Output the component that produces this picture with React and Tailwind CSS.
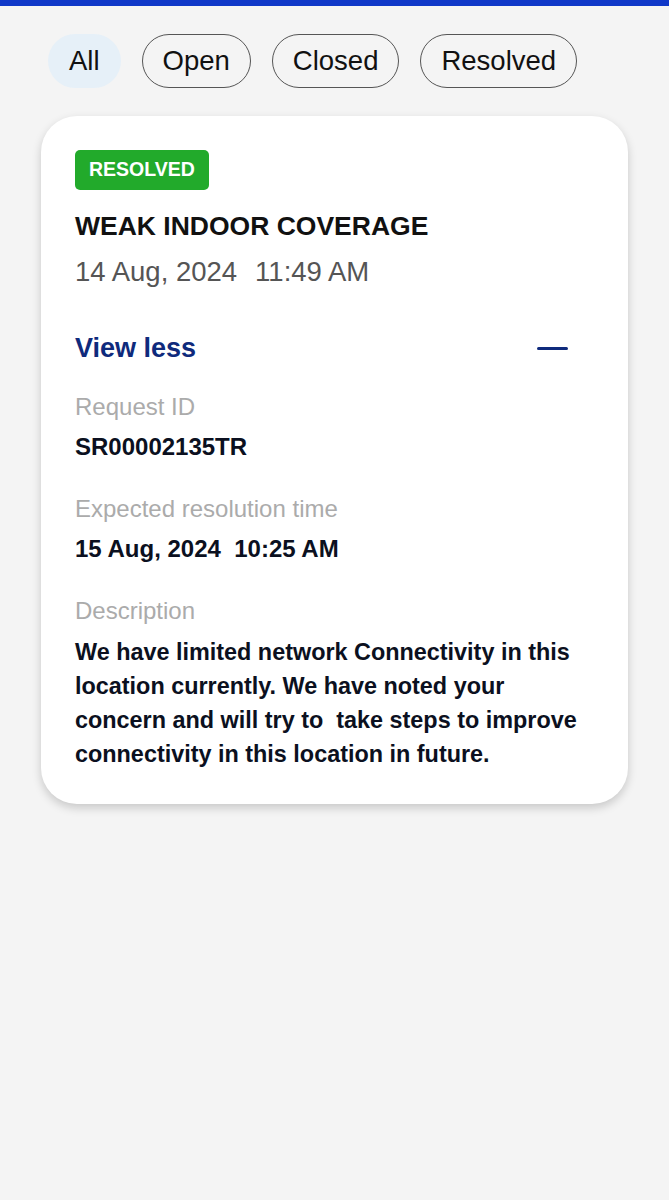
const filters = ['All', 'Open', 'Closed', 'Resolved']

function Field({ label, value }) {
  return (
    <div className="mt-[34px] first:mt-[30px]">
      <p className="text-[24px] leading-[28px] text-[#ababab]">{label}</p>
      <p className="mt-[12px] whitespace-pre text-[24px] font-bold leading-[28px] text-[#0b1020]">{value}</p>
    </div>
  )
}

export default function App() {
  return (
    <div className="min-h-[1200px] bg-[#f4f4f4] font-['Liberation_Sans',Arial,sans-serif]">
      <div className="h-[6px] bg-[#1038c8]" />

      <div className="flex gap-[21px] px-[48px] pt-[28px]">
        {filters.map((f, i) => (
          <button
            key={f}
            className={
              i === 0
                ? 'h-[54px] rounded-full bg-[#e6f0f8] px-[21px] text-[27.5px] text-[#111]'
                : 'h-[54px] rounded-full border-[1.5px] border-[#555] px-[20px] text-[27.5px] text-[#111]'
            }
          >
            {f}
          </button>
        ))}
      </div>

      <div className="mx-[41px] mt-[28px] rounded-[36px] bg-white px-[34px] pb-[33px] pt-[34px] shadow-[0_4px_10px_rgba(0,0,0,0.18)]">
        <span className="inline-flex h-[40px] items-center rounded-[5px] bg-[#22aa2b] px-[14px] text-[19.5px] font-bold text-white">
          RESOLVED
        </span>
        <h2 className="mt-[20px] text-[26.5px] font-bold leading-[32px] text-[#111]">WEAK INDOOR COVERAGE</h2>
        <p className="mt-[15px] flex text-[27.5px] leading-[30px] text-[#555]">
          <span>14 Aug, 2024</span>
          <span className="ml-[18px]">11:49 AM</span>
        </p>

        <div className="mt-[46px] flex items-center justify-between pr-[26px]">
          <span className="text-[27px] font-bold leading-[30px] text-[#0f2a7c]">View less</span>
          <span className="h-[3px] w-[31px] rounded-full bg-[#0f2a7c]" />
        </div>

        <div className="flex flex-col">
          <Field label="Request ID" value="SR00002135TR" />
          <Field label="Expected resolution time" value="15 Aug, 2024  10:25 AM" />
          <div className="mt-[34px]">
            <p className="text-[24px] leading-[28px] text-[#ababab]">Description</p>
            <p className="mt-[10px] whitespace-pre-wrap text-[23.4px] font-bold leading-[34px] text-[#0b1020]">
              {'We have limited network Connectivity in this location currently. We have noted your concern and will try to  take steps to improve connectivity in this location in future.'}
            </p>
          </div>
        </div>
      </div>
    </div>
  )
}
